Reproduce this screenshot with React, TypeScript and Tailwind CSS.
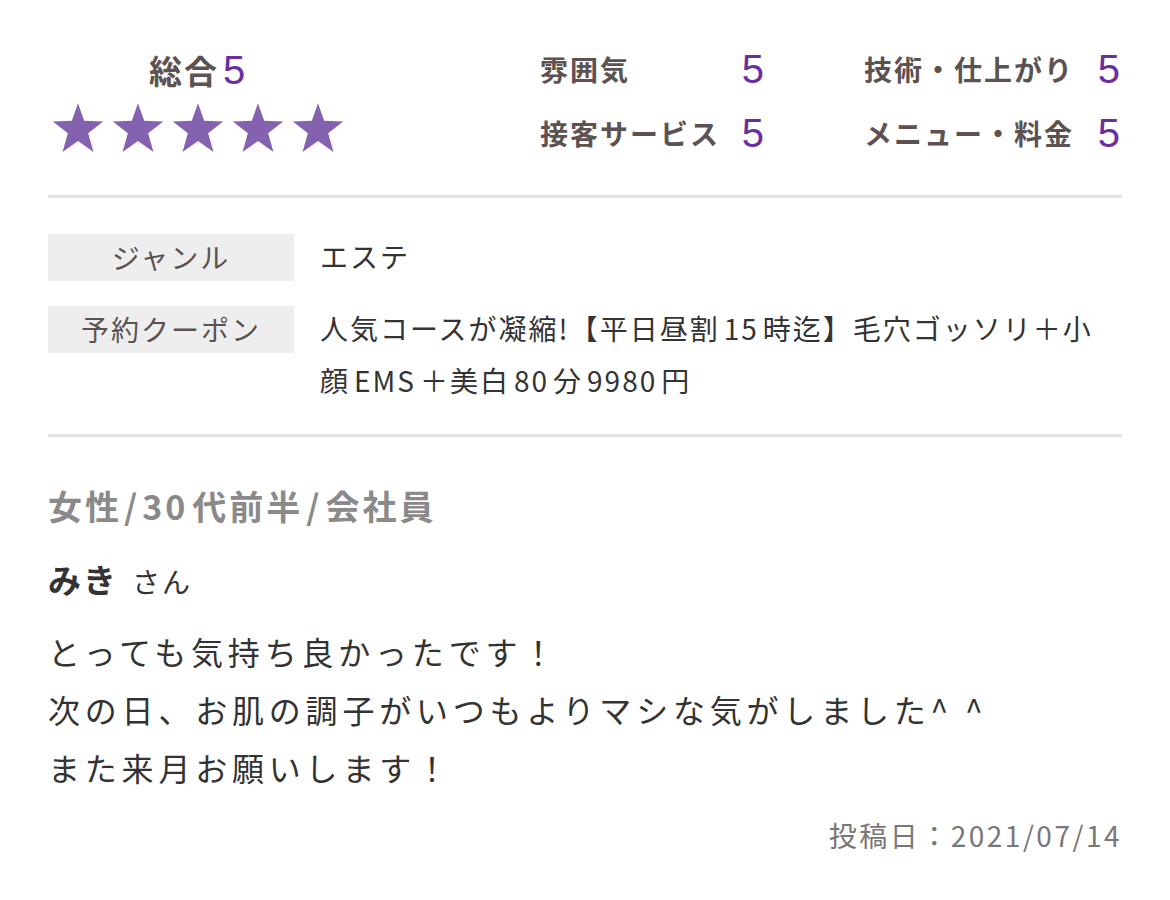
import React from "react";

const jp = "font-['Noto_Sans_CJK_JP','Noto_Sans',sans-serif]";

function Star() {
  return (
    <svg viewBox="0 0 24 24" className="w-[54px] h-[53px]">
      <polygon
        fill="#8562b0"
        points="12,0.6 14.8,8.5 23.4,8.8 16.6,14.1 19,22.6 12,17.7 5,22.6 7.4,14.1 0.6,8.8 9.2,8.5"
      />
    </svg>
  );
}

// latin runs inside Japanese text get a little air on both sides
function L({ children }: { children: React.ReactNode }) {
  return <span className="mx-[4px]">{children}</span>;
}

function Score({ label, value }: { label: string; value: number }) {
  return (
    <div className="flex items-center justify-between">
      <span className="text-[28px] font-bold tracking-[2px] text-[#5c5252]">{label}</span>
      <span className="text-[40px] leading-none font-['Liberation_Sans',sans-serif] text-[#6a2ea0]">
        {value}
      </span>
    </div>
  );
}

function InfoRow({ label, children }: { label: string; children: React.ReactNode }) {
  return (
    <div className="flex gap-[26px]">
      <div className="w-[246px] shrink-0 h-[47px] bg-[#eeeeee] flex items-center justify-center text-[28px] tracking-[2px] text-[#5c5252]">
        {label}
      </div>
      <div className="text-[28px] leading-[52px] -mt-[4px] text-[#333333] tracking-[2px]">{children}</div>
    </div>
  );
}

export default function App() {
  return (
    <main className={`${jp} min-h-screen bg-white px-[48px] pt-[46px]`}>
      <div className="w-[1074px]">
        <section className="flex items-start pb-[40px] border-b-[3px] border-[#e2e2e2]">
          <div className="w-[300px] flex flex-col items-center">
            <div className="flex items-baseline gap-[4px] text-[#5c5252] font-bold text-[33px] tracking-[2px]">
              <span>総合</span>
              <span className="text-[40px] leading-none font-normal font-['Liberation_Sans',sans-serif] text-[#6a2ea0]">5</span>
            </div>
            <div className="flex gap-[6px] mt-[6px]">
              <Star />
              <Star />
              <Star />
              <Star />
              <Star />
            </div>
          </div>
          <div className="ml-[192px] grid grid-cols-[224px_256px] gap-x-[100px] gap-y-[22px] pt-[2px]">
            <Score label="雰囲気" value={5} />
            <Score label="技術・仕上がり" value={5} />
            <Score label="接客サービス" value={5} />
            <Score label="メニュー・料金" value={5} />
          </div>
        </section>

        <section className="flex flex-col gap-[24px] pt-[36px] pb-[28px] border-b-[3px] border-[#e2e2e2]">
          <InfoRow label="ジャンル">エステ</InfoRow>
          <InfoRow label="予約クーポン">
            人気コースが凝縮!【平日昼割<L>15</L>時迄】毛穴ゴッソリ＋小
            <br />
            顔<L>EMS</L>＋美白<L>80</L>分<L>9980</L>円
          </InfoRow>
        </section>

        <section className="pt-[52px]">
          <div className="text-[34px] font-bold text-[#8a8a8a] leading-none tracking-[3px]">
            女性<span className="mx-[2px]">/</span>
            <span className="mr-[4px]">30</span>代前半<span className="mx-[3px]">/</span>会社員
          </div>
          <div className="mt-[40px] flex items-baseline gap-[14px] text-[#333333]">
            <span className="text-[33px] font-bold leading-none tracking-[2px]">みき</span>
            <span className="text-[28px] leading-none tracking-[2px]">さん</span>
          </div>
          <p className="mt-[26px] text-[32px] leading-[58px] text-[#333333] tracking-[4.8px]">
            とっても気持ち良かったです！
            <br />
            次の日、お肌の調子がいつもよりマシな気がしました^ ^
            <br />
            また来月お願いします！
          </p>
          <div className="mt-[18px] text-right text-[28px] text-[#777777] tracking-[2.5px]">投稿日：2021/07/14</div>
        </section>
      </div>
    </main>
  );
}
